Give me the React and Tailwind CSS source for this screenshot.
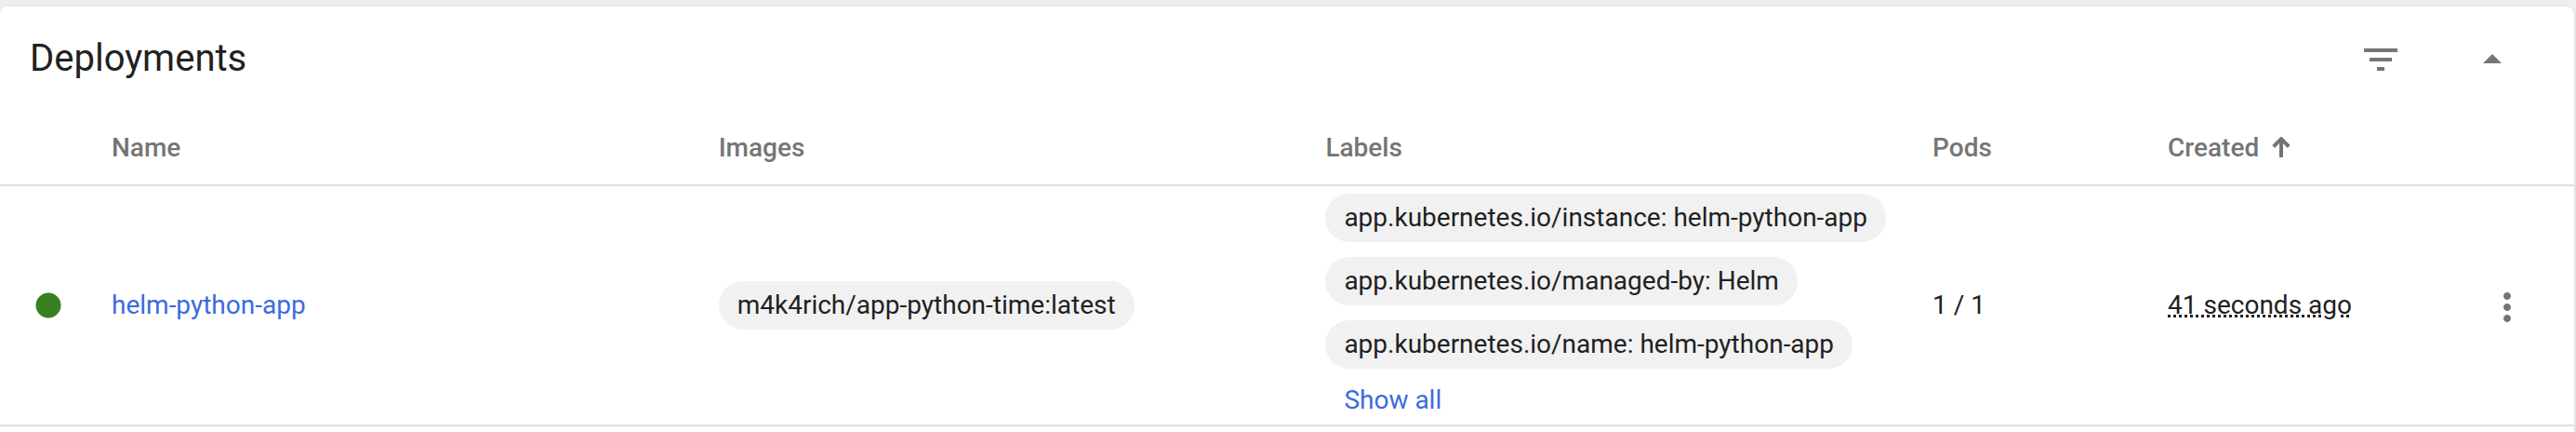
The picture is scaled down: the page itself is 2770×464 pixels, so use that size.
import React from "react";

const labels = [
  "app.kubernetes.io/instance: helm-python-app",
  "app.kubernetes.io/managed-by: Helm",
  "app.kubernetes.io/name: helm-python-app",
];

function Chip({ children }) {
  return (
    <span className="inline-flex h-[52px] items-center whitespace-nowrap rounded-full bg-[#f1f1f1] px-5">
      {children}
    </span>
  );
}

function IconButton({ label, path }) {
  return (
    <button type="button" aria-label={label} className="flex size-12 items-center justify-center text-[#757575]">
      <svg viewBox="0 0 24 24" className="size-12" fill="currentColor" aria-hidden="true">
        <path d={path} />
      </svg>
    </button>
  );
}

function SortArrow() {
  return (
    <svg viewBox="0 0 20 24" className="h-6 w-5" fill="none" stroke="currentColor" strokeWidth="4" aria-hidden="true">
      <path d="M10 22V3M1.700 10.500L10 2.200l8.300 8.300" />
    </svg>
  );
}

export default function App() {
  return (
    <div className="min-h-screen bg-[#eceef0] pr-0.5 pt-[7px] font-['Roboto',sans-serif] text-[28px] leading-8 text-[#212121]">
      <section className="min-h-[calc(100vh-7px)] rounded-t-lg bg-white shadow-[0_2px_4px_rgba(0,0,0,0.15)]">
        <header className="flex h-28 items-center justify-between pl-8 pr-16">
          <h2 className="text-[40px] leading-10">Deployments</h2>
          <div className="flex gap-[72px] pt-0.5">
            <IconButton label="Filter" path="M10 18h4v-2h-4v2zM3 6v2h18V6H3zm3 7h12v-2H6v2z" />
            <IconButton label="Collapse" path="M7 14l5-5 5 5z" />
          </div>
        </header>
        <table className="w-full table-fixed border-collapse text-left">
          <colgroup>
            <col className="w-[120px]" />
            <col className="w-[23.58%]" />
            <col className="w-[23.58%]" />
            <col className="w-[23.58%]" />
            <col className="w-[9.14%]" />
            <col />
            <col className="w-[120px]" />
          </colgroup>
          <thead>
            <tr className="h-20 border-b-2 border-[#e0e0e0] text-[#757575]">
              <td />
              <th className="p-0 font-medium">Name</th>
              <th className="p-0 font-medium">Images</th>
              <th className="p-0 font-medium">Labels</th>
              <th className="p-0 font-medium">Pods</th>
              <th className="p-0 font-medium" aria-sort="ascending">
                <button type="button" className="flex items-center gap-3.5 font-medium">
                  Created
                  <SortArrow />
                </button>
              </th>
              <td />
            </tr>
          </thead>
          <tbody>
            <tr className="border-b-2 border-[#e0e0e0]">
              <td className="p-0">
                <svg viewBox="0 0 28 28" className="ml-[38px] size-7" role="img" aria-label="Running">
                  <circle cx="14" cy="14" r="13.500" fill="#388020" />
                </svg>
              </td>
              <td className="p-0">
                <a href="#helm-python-app" className="text-[#3c6ae0]">helm-python-app</a>
              </td>
              <td className="p-0">
                <div className="flex">
                  <Chip>m4k4rich/app-python-time:latest</Chip>
                </div>
              </td>
              <td className="px-0 py-2">
                <div className="flex flex-col items-start gap-4">
                  {labels.map((label) => (
                    <Chip key={label}>{label}</Chip>
                  ))}
                  <button type="button" className="px-5 py-0.5 text-[#3c6ae0]">Show all</button>
                </div>
              </td>
              <td className="p-0">1 / 1</td>
              <td className="p-0">
                <time className="underline decoration-dotted decoration-[3px] underline-offset-1">41 seconds ago</time>
              </td>
              <td className="p-0">
                <div className="flex justify-end pr-12 pt-1">
                  <IconButton
                    label="Actions"
                    path="M12 8c1.100 0 2-.9 2-2s-.9-2-2-2-2 .9-2 2 .9 2 2 2zm0 2c-1.100 0-2 .9-2 2s.9 2 2 2 2-.9 2-2-.9-2-2-2zm0 6c-1.100 0-2 .9-2 2s.9 2 2 2 2-.9 2-2-.9-2-2-2z"
                  />
                </div>
              </td>
            </tr>
          </tbody>
        </table>
      </section>
    </div>
  );
}
